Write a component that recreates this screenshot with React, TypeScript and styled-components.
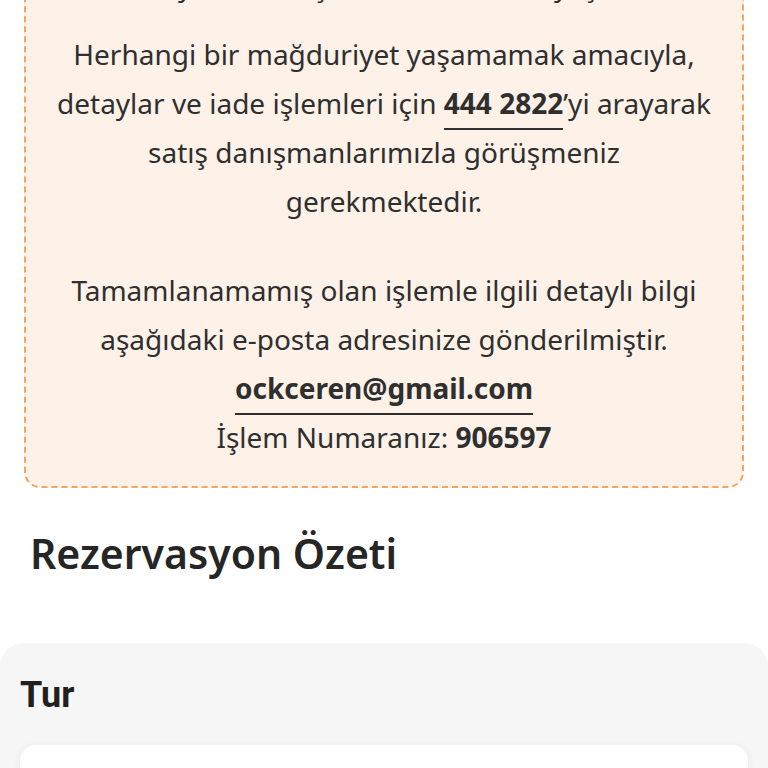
import styled, { createGlobalStyle } from "styled-components";

const GlobalStyle = createGlobalStyle`
  html, body {
    margin: 0;
    padding: 0;
    background: #ffffff;
    overflow: hidden;
  }
  body {
    font-family: "Noto Sans", "Open Sans", sans-serif;
    color: #2f2f2f;
  }
`;

const Page = styled.div`
  width: 768px;
  height: 768px;
  overflow: hidden;
  display: flex;
  flex-direction: column;
`;

const Scroller = styled.div`
  display: flex;
  flex-direction: column;
  margin-top: -41px;
`;

const NoticeBox = styled.div`
  margin: 0 24px;
  padding: 0 24px 24px;
  background: #fdf1e8;
  border: 2px dashed #f5a461;
  border-radius: 16px;
  text-align: center;
`;

const Paragraph = styled.p<{ $gap?: number }>`
  margin: 0 0 ${(p) => p.$gap ?? 40}px;
  font-size: 28px;
  line-height: 49px;
  color: #2f2f2f;

  &:last-child {
    margin-bottom: 0;
  }
`;

const Underlined = styled.span`
  font-weight: 700;
  padding-bottom: 6px;
  border-bottom: 2px solid #2f2f2f;
`;

const Strong = styled.span`
  font-weight: 700;
`;

const SectionTitle = styled.h2`
  margin: 38px 0 0 30px;
  font-size: 41px;
  line-height: 55px;
  font-weight: 600;
  color: #262626;
`;

const SummaryCard = styled.section`
  margin-top: 62px;
  background: #f6f6f6;
  border-radius: 24px 24px 0 0;
  padding: 31px 20px 0;
  display: flex;
  flex-direction: column;
  gap: 29px;
`;

const CardTitle = styled.h3`
  margin: 0;
  font-family: "Roboto", "Noto Sans", sans-serif;
  font-size: 36px;
  line-height: 42px;
  font-weight: 700;
  color: #202020;
`;

const InnerCard = styled.div`
  height: 160px;
  background: #ffffff;
  border-radius: 16px;
  box-shadow: 0 2px 10px rgba(0, 0, 0, 0.06);
`;

export default function App() {
  return (
    <Page>
      <GlobalStyle />
      <Scroller>
        <NoticeBox>
          <Paragraph $gap={20}>Rezervasyonunuz, işleminiz sırasında yaşanan bir</Paragraph>
          <Paragraph>
            Herhangi bir mağduriyet yaşamamak amacıyla, detaylar ve iade
            işlemleri için <Underlined>444 2822</Underlined>’yi arayarak satış
            danışmanlarımızla görüşmeniz gerekmektedir.
          </Paragraph>
          <Paragraph>
            Tamamlanamamış olan işlemle ilgili detaylı bilgi aşağıdaki e-posta
            adresinize gönderilmiştir.
            <br />
            <Underlined>ockceren@gmail.com</Underlined>
            <br />
            İşlem Numaranız: <Strong>906597</Strong>
          </Paragraph>
        </NoticeBox>
        <SectionTitle>Rezervasyon Özeti</SectionTitle>
        <SummaryCard>
          <CardTitle>Tur</CardTitle>
          <InnerCard />
        </SummaryCard>
      </Scroller>
    </Page>
  );
}
